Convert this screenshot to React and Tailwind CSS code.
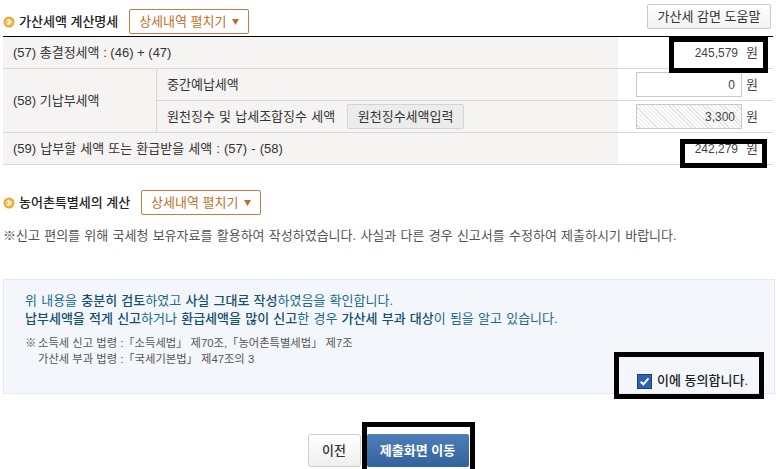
import React from "react";

const font = { fontFamily: '"Liberation Sans", "Noto Sans CJK KR", sans-serif' };

// 섹션 제목 앞의 주황색 원형 불릿
const Bullet = () => (
  <svg width="12" height="12" viewBox="0 0 12 12" className="shrink-0">
    <circle cx="6" cy="6" r="5.5" fill="#f0a52b" />
    <circle cx="6" cy="6" r="3.6" fill="#f7c873" />
    <path d="M4.6 3.4 7.2 6 4.6 8.6" fill="none" stroke="#fff" strokeWidth="1.6" />
  </svg>
);

const ExpandButton = () => (
  <button className="flex h-[25px] w-[120px] items-center justify-center gap-[6px] rounded-[2px] border border-[#bd7f43] bg-white text-[13px] text-[#bd6f28]">
    상세내역 펼치기
    <svg width="7" height="6" viewBox="0 0 7 6">
      <path d="M0 0H7L3.5 6Z" fill="#bd6f28" />
    </svg>
  </button>
);

const Amount = ({ value }) => (
  <div className="flex h-full items-center justify-end pr-[15px] text-[12px] text-[#444]">
    <span>{value}</span>
    <span className="ml-[8px] text-[13px]">원</span>
  </div>
);

const InputAmount = ({ value, hatched }) => (
  <div className="flex h-full items-center justify-end pr-[15px] text-[12px] text-[#444]">
    <div
      className={`flex h-[25px] w-[106px] items-center justify-end border border-[#c9c9c9] pr-[6px] ${
        hatched
          ? "bg-[repeating-linear-gradient(45deg,#fff,#fff_2px,#e2e2e2_2px,#e2e2e2_3px)]"
          : "bg-white"
      }`}
    >
      {value}
    </div>
    <span className="ml-[4px] text-[13px]">원</span>
  </div>
);

export default function App() {
  return (
    <div style={font} className="relative h-[469px] w-[776px] overflow-hidden bg-white text-[13px] leading-[18px] text-[#333]">
      <div className="flex h-[36px] items-start justify-between pl-[3px] pr-[5px] pt-[4px]">
        <div className="flex items-center pt-[5px]">
          <Bullet />
          <span className="ml-[4px] font-medium text-[#222]">가산세액 계산명세</span>
          <div className="ml-[11px]">
            <ExpandButton />
          </div>
        </div>
        <button className="h-[25px] w-[124px] rounded-[2px] border border-[#c8c8c8] bg-gradient-to-b from-white to-[#f1f1f1] text-[13px] text-[#333]">
          가산세 감면 도움말
        </button>
      </div>

      <div className="ml-[3px] mr-[3px] grid grid-cols-[154px_461px_1fr] grid-rows-[32px_32px_32px_32px] border-t border-black">
        <div className="col-span-2 flex items-center border-b border-[#d8d8d8] bg-[#f5f4f2] pl-[10px]">
          (57) 총결정세액 : (46) + (47)
        </div>
        <div className="border-b border-[#d8d8d8]">
          <Amount value="245,579" />
        </div>

        <div className="row-span-2 flex items-center border-b border-r border-[#d8d8d8] bg-[#f5f4f2] pl-[10px]">
          (58) 기납부세액
        </div>
        <div className="flex items-center border-b border-[#d8d8d8] bg-[#f5f4f2] pl-[10px]">중간예납세액</div>
        <div className="border-b border-[#d8d8d8]">
          <InputAmount value="0" />
        </div>

        <div className="flex items-center border-b border-[#d8d8d8] bg-[#f5f4f2] pl-[10px] [word-spacing:0.6px]">
          원천징수 및 납세조합징수 세액
          <button className="ml-[12px] h-[25px] w-[117px] rounded-[2px] border border-[#d4d4d4] bg-[#ececec] text-[13px] text-[#333]">
            원천징수세액입력
          </button>
        </div>
        <div className="border-b border-[#d8d8d8]">
          <InputAmount value="3,300" hatched />
        </div>

        <div className="col-span-2 flex items-center border-b border-[#d8d8d8] bg-[#f5f4f2] pl-[10px] [word-spacing:0.5px]">
          (59) 납부할 세액 또는 환급받을 세액 : (57) - (58)
        </div>
        <div className="border-b border-[#d8d8d8]">
          <Amount value="242,279" />
        </div>
      </div>

      <div className="mt-[25px] flex items-center pl-[3px]">
        <Bullet />
        <span className="ml-[4px] font-medium text-[#222]">농어촌특별세의 계산</span>
        <div className="ml-[11px]">
          <ExpandButton />
        </div>
      </div>

      <p className="mt-[12px] whitespace-nowrap pl-[3px] text-[#555] [word-spacing:0.65px]">
        <span className="inline-block w-[13px]">※</span>신고 편의를 위해 국세청 보유자료를 활용하여 작성하였습니다. 사실과 다른 경우 신고서를 수정하여 제출하시기 바랍니다.
      </p>

      <div className="relative ml-[3px] mr-[1px] mt-[34px] h-[115px] border border-[#e6e8ea] bg-[#f3f6fb] pl-[21px] pt-[12px]">
        <p className="text-[#1c6a8c] [word-spacing:0.6px]">
          위 내용을 <b className="font-medium text-[#14506e]">충분히 검토</b>하였고{" "}
          <b className="font-medium text-[#14506e]">사실 그대로 작성</b>하였음을 확인합니다.
          <br />
          <b className="font-medium text-[#14506e]">납부세액을 적게 신고</b>하거나{" "}
          <b className="font-medium text-[#14506e]">환급세액을 많이 신고</b>한 경우{" "}
          <b className="font-medium text-[#14506e]">가산세 부과 대상</b>이 됨을 알고 있습니다.
        </p>
        <div className="mt-[7px] flex text-[11.3px] leading-[16px] text-[#555]">
          <span className="w-[13px] shrink-0">※</span>
          <div>
            소득세 신고 법령 :「소득세법」 제70조,「농어촌특별세법」 제7조
            <br />
            가산세 부과 법령 :「국세기본법」 제47조의 3
          </div>
        </div>
        <div className="absolute bottom-[3px] right-[26px] flex items-center gap-[5px] font-medium text-[#222]">
          <span className="flex h-[15px] w-[15px] items-center justify-center border border-[#1d3f73] bg-[#2e63b4]">
            <svg width="11" height="11" viewBox="0 0 10 10">
              <path d="M1.5 5.2 4 7.6 8.6 2.2" fill="none" stroke="#fff" strokeWidth="1.8" />
            </svg>
          </span>
          이에 동의합니다.
        </div>
      </div>

      <div className="mt-[40px] flex justify-center gap-[6px]">
        <button className="h-[33px] w-[53px] rounded-[3px] border border-[#cfcfcf] bg-gradient-to-b from-white to-[#efefef] text-[13px] font-medium text-[#333]">
          이전
        </button>
        <button className="h-[33px] w-[102px] rounded-[2px] bg-gradient-to-b from-[#4f7fb8] to-[#33619c] text-[13px] font-bold text-white">
          제출화면 이동
        </button>
      </div>

      {/* 스크린샷 위에 그려진 검은 강조 박스 */}
      <div className="pointer-events-none absolute left-[669px] top-[37px] h-[36px] w-[99px] border-[5px] border-black" />
      <div className="pointer-events-none absolute left-[680px] top-[139px] h-[29px] w-[87px] border-[5px] border-black" />
      <div className="pointer-events-none absolute left-[614px] top-[352px] h-[47px] w-[150px] border-[5px] border-black" />
      <div className="pointer-events-none absolute left-[362px] top-[422px] h-[47px] w-[113px] border-[5px] border-b-0 border-black" />
    </div>
  );
}
